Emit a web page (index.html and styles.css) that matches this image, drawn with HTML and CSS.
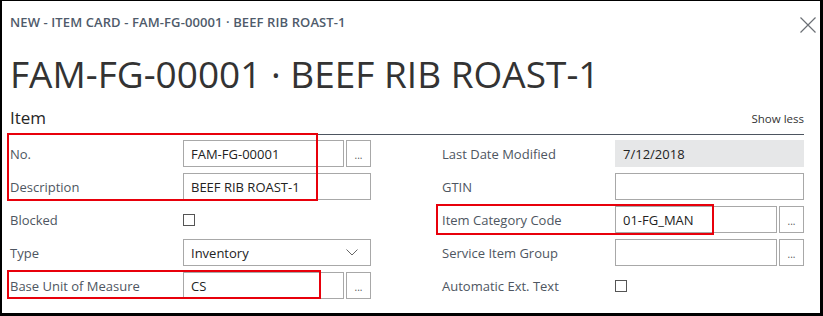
FILE: index.html
```html
<!DOCTYPE html>
<html>
<head>
<meta charset="utf-8">
<link rel="stylesheet" href="styles.css">
</head>
<body>
<div class="panel">
  <div class="topbar">
    <span class="crumb">NEW - ITEM CARD - FAM-FG-00001 · BEEF RIB ROAST-1</span>
    <span class="close"><svg width="16" height="16" viewBox="0 0 16 16"><path d="M0.5 0.5 L15.5 15.5 M15.5 0.5 L0.5 15.5" stroke="#6b6f75" stroke-width="1.2" fill="none"/></svg></span>
  </div>
  <h1 class="title">FAM-FG-00001 · BEEF RIB ROAST-1</h1>
  <div class="section-head">
    <span class="section-title">Item</span>
    <span class="show-less">Show less</span>
  </div>
  <div class="form">
    <div class="col">
      <div class="row"><span class="label">No.</span><div class="field"><span class="input with-btn">FAM-FG-00001</span><span class="dots">...</span></div></div>
      <div class="row"><span class="label">Description</span><div class="field"><span class="input">BEEF RIB ROAST-1</span></div></div>
      <div class="row"><span class="label">Blocked</span><div class="field"><span class="check"></span></div></div>
      <div class="row"><span class="label">Type</span><div class="field"><span class="input select">Inventory<svg class="chev" width="12" height="7" viewBox="0 0 12 7"><path d="M0.5 0.5 L6 6 L11.5 0.5" stroke="#666" stroke-width="1" fill="none"/></svg></span></div></div>
      <div class="row"><span class="label">Base Unit of Measure</span><div class="field"><span class="input with-btn">CS</span><span class="dots">...</span></div></div>
    </div>
    <div class="col right">
      <div class="row"><span class="label">Last Date Modified</span><div class="field"><span class="input readonly">7/12/2018</span></div></div>
      <div class="row"><span class="label">GTIN</span><div class="field"><span class="input"></span></div></div>
      <div class="row"><span class="label">Item Category Code</span><div class="field"><span class="input with-btn">01-FG_MAN</span><span class="dots">...</span></div></div>
      <div class="row"><span class="label">Service Item Group</span><div class="field"><span class="input with-btn"></span><span class="dots">...</span></div></div>
      <div class="row"><span class="label">Automatic Ext. Text</span><div class="field"><span class="check"></span></div></div>
    </div>
  </div>
  <div class="mark mark-no"></div>
  <div class="mark mark-cat"></div>
  <div class="mark mark-uom"></div>
</div>
</body>
</html>
```
FILE: styles.css
```css
html, body {
  margin: 0;
  padding: 0;
  background: #000;
}
body {
  width: 823px;
  height: 316px;
  overflow: hidden;
  font-family: "Open Sans", "Noto Sans", sans-serif;
}
.panel {
  position: relative;
  background: #fff;
  margin: 1px 3px 0 2px;
  height: 312px;
  box-sizing: border-box;
  padding: 0 0 0 8px;
}
.topbar {
  display: flex;
  justify-content: space-between;
  align-items: flex-start;
  height: 34px;
}
.crumb {
  margin-top: 13px;
  font-size: 13px;
  font-weight: 600;
  color: #4f5b6b;
  line-height: 16px;
  letter-spacing: 0.1px;
}
.close {
  margin: 16px 4px 0 0;
  width: 16px;
  height: 16px;
  display: block;
}
.close svg { display: block; }
.title {
  margin: 15px 0 0 0;
  font-size: 37px;
  font-weight: 400;
  line-height: 47px;
  color: #333;
  letter-spacing: 0;
}
.section-head {
  display: flex;
  justify-content: space-between;
  align-items: flex-end;
  margin-right: 16px;
  border-bottom: 1px solid #4d5560;
  padding-bottom: 5px;
  margin-top: 10px;
}
.section-title {
  font-size: 17px;
  color: #262626;
  line-height: 22px;
}
.show-less {
  font-size: 11.5px;
  color: #333;
  line-height: 16px;
  padding-bottom: 2px;
}
.form {
  display: flex;
  margin-top: 5px;
}
.col {
  display: flex;
  flex-direction: column;
  gap: 6px;
  width: 361px;
}
.col.right {
  margin-left: 71px;
  width: 362px;
}
.row {
  display: grid;
  grid-template-columns: 173px 1fr;
  height: 27px;
  align-items: center;
}
.label {
  font-size: 13px;
  color: #4e5661;
}
.field {
  display: flex;
  height: 27px;
  align-items: center;
  gap: 2px;
}
.input {
  flex: 1;
  height: 27px;
  box-sizing: border-box;
  border: 1px solid #a8a8a8;
  padding: 0 7px;
  font-size: 13px;
  color: #222;
  display: flex;
  align-items: center;
}
.input.readonly {
  background: #e6e7e8;
  border-color: #e6e7e8;
}
.input.select {
  justify-content: space-between;
}
.chev { margin-right: 5px; }
.dots {
  width: 25px;
  height: 27px;
  box-sizing: border-box;
  border: 1px solid #a8a8a8;
  font-size: 10px;
  color: #555;
  text-align: center;
  line-height: 29px;
}
.check {
  width: 12px;
  height: 12px;
  box-sizing: border-box;
  border: 1px solid #555;
  display: block;
}
.mark {
  position: absolute;
  border: 2px solid #e8000b;
  box-sizing: border-box;
}
.mark-no { left: 5px; top: 132px; width: 311px; height: 68px; }
.mark-cat { left: 434px; top: 203px; width: 278px; height: 31px; }
.mark-uom { left: 5px; top: 269px; width: 314px; height: 29px; }
```
